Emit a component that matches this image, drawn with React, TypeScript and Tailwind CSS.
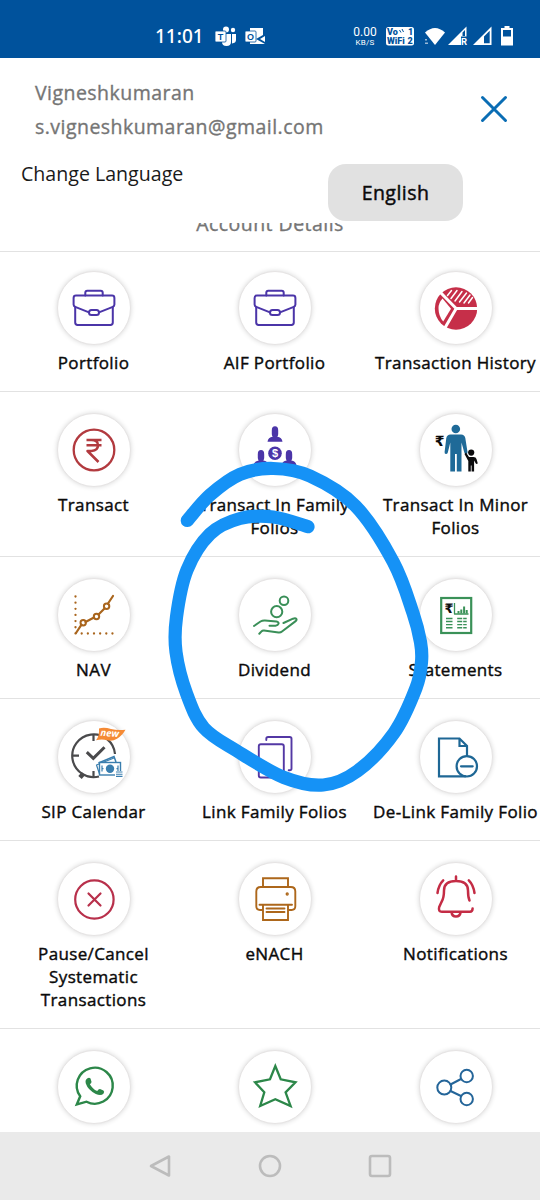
import type { ReactNode } from "react";

const S = { fill: "none", strokeLinecap: "round", strokeLinejoin: "round" } as const;

/* Icons are drawn on a 72-unit square whose origin is its centre. */

const Briefcase = () => (
  <g {...S} stroke="#4b35a8" strokeWidth="2">
    <path d="M-20.4-3.5V-10q0-2.4 2.4-2.4H18q2.4 0 2.4 2.4v6.5q0 1.6-1.6 2.4L5 4.4M-5 4.4-18.8-1.1q-1.6-.8-1.6-2.4" />
    <path d="M-18.8-1V14.6q0 2.4 2.4 2.4H16.4q2.4 0 2.4-2.4V-1M-8.7-12.4v-2.8q0-2 2-2H6.7q2 0 2 2v2.8" />
    <rect x="-5" y="2" width="10" height="5" rx="2.5" />
  </g>
);

const Pie = () => (
  <g>
    <circle cx="0" cy=".5" r="21.2" fill="#c62f49" />
    <path d="M-13.5-9.5-5 .8-12.8 13.5Q-17.5 8-17.5 0q0-5 4-9.5z" fill="#fff" />
    <path d="M-16-16 .2.5H22M.2.5-12 21.5" fill="none" stroke="#fff" strokeWidth="3" />
    <path d="M-8.5-12.5-4.500-17.500M-5-9.500 1-17.500M-1-7 6-16.500M3.500-6 10.500-15M8-5l6-8M12.500-5l4-5.500" {...S} stroke="#fff" strokeWidth="1.500" />
  </g>
);

const Transact = () => (
  <g {...S} stroke="#b23a3f" strokeWidth="2.3">
    <circle cx="0" cy="0" r="20.3" />
    <path d="M-7.500-10H7.500M-7.500-4.800H7.500M-6.500-10h4q6.500 0 6.500 5.200T-2.500 1h-4L4.500 12" strokeLinecap="butt" strokeWidth="2.500" />
  </g>
);

const Person = () => (
  <path d="M-3.2-19.5Q-3.2-23.7 0-23.7t3.2 4.2V-16q0 1.500-.9 2.800 4.600.7 5.200 4.900H-7.500q.6-4.200 5.200-4.900-.9-1.300-.9-2.800z" />
);

const FamilyTransact = () => (
  <g fill="#4b35a8">
    <Person />
    <g transform="translate(-14 23.8)"><Person /></g>
    <g transform="translate(14 23.8)"><Person /></g>
    <circle cx="0" cy="3.3" r="6.8" />
    <text x="0" y="7.2" textAnchor="middle" className="font-['Liberation_Sans'] text-[11px] font-bold" fill="#fff">$</text>
  </g>
);

const Minor = () => (
  <g>
    <g fill="#1f6a98">
      <circle cx="-.2" cy="-21" r="4.3" />
      <path d="M-5.500-15.500h10.600q3.400 0 4.200 3.500L11.500 2q.2 2-1.300 2T8.300 2.500L5.500-7.500V21.500H.8V4H-1V21.500h-4.700V-7.500L-8.200 2.500q-.4 1.500-1.900 1.500T-11.400 2l1.700-14q.8-3.500 4.200-3.500z" />
    </g>
    <g fill="#0b0b0d">
      <circle cx="15.2" cy="2.6" r="3.1" />
      <path d="M10 2.500 13 7h4.500q2.500 0 3 2l1.300 4.500-1.700.5-2-3.500v11h-2.500v-6h-.8v6h-2.500V11L8.500 4z" />
    </g>
    <text x="-16.3" y="-4" textAnchor="middle" className="font-['DejaVu_Sans'] text-[14px] font-bold" fill="#0b0b0d">₹</text>
  </g>
);

const Nav = () => (
  <g {...S} stroke="#a9651d">
    <path d="M-18.5-18.5V18.5M-12.3 18.5H19" strokeWidth="2.3" strokeDasharray="0 6.15" />
    <path d="m-18 18 5.500-8.300M-8.500 7 0 2.500M4.500-.500 10.500-6.500M14-11.500 19-19" strokeWidth="2.200" />
    <circle cx="-10.8" cy="7.7" r="2.7" strokeWidth="2" />
    <circle cx="2.5" cy="1.5" r="2.7" strokeWidth="2" />
    <circle cx="12.6" cy="-8.8" r="2.7" strokeWidth="2" />
  </g>
);

const Dividend = () => (
  <g {...S} stroke="#3a8f58" strokeWidth="2">
    <circle cx="9" cy="-14.2" r="4.3" />
    <circle cx="1.7" cy="-3.3" r="5.6" />
    <path d="M-21 11-14.500 6.500q2-1.200 4.500-1L1.500 6.500q2.500.5 2 2.200t-3 2h-6M8.500 8l9.500-4.300q2.500-.9 3.300.2t-1 2.500L7 16.500q-1.500 1.300-3.500 1L-11 15.600q-1.700-.1-2.500.8l-2.200 2.400" />
  </g>
);

const Statements = () => (
  <g {...S} stroke="#3a9158" strokeLinecap="butt">
    <rect x="-14.8" y="-17" width="30" height="35" strokeWidth="2.2" strokeLinejoin="miter" />
    <path d="M-1.500-12V-1H12.500" strokeWidth="1.300" />
    <path d="M2.500-1.500v-2.500M5.300-1.500v-4M8.100-1.500v-7M10.700-1.500v-3.500" strokeWidth="2" />
    <path d="M-10 3.500h6.500M-10 6.500h6.500M-10 9.600h6.500M-10 12.700h6.500" strokeWidth="1.400" />
    <path d="M1.200 3.500h9.500M1.200 6.500h9.500M1.200 9.600h9.500M1.200 12.700h9.500" strokeWidth="1.400" strokeDasharray="5 1 4 0" />
    <text x="-7" y="-2" textAnchor="middle" stroke="none" fill="#101010" className="font-['DejaVu_Sans'] text-[13px] font-bold">₹</text>
  </g>
);

const SipCalendar = () => (
  <g>
    <g {...S} stroke="#4a4a4c" strokeLinecap="butt">
      <path d="M21-3A21.400 21.400 0 1 0 5 19.500" strokeWidth="2.200" />
      <path d="M-.500-22.500v6.500M-21.500-1.300h6.500M-.500 20v-6" strokeWidth="2.200" />
      <path d="m-14 20.500 3.500-4" strokeWidth="4.500" />
      <path d="m-7.200-4.800 6.500 6.200L10.500-9.800" strokeWidth="3" strokeLinejoin="miter" />
    </g>
    <path d="M4.500 6 20-.500l2 5.500" fill="#fff" stroke="#3a7eae" strokeWidth="1.500" />
    <path d="M5.500 17 2.500 8 20 1" {...S} stroke="#3a7eae" strokeWidth="1.200" />
    <rect x="5.5" y="5.5" width="21" height="12.5" fill="#fff" stroke="#3a7eae" strokeWidth="1.4" />
    <circle cx="16" cy="11.8" r="4.2" fill="#3a7eae" />
    <path d="M8 8.500v6M24 8.500v6M8 11.700h1.500M22.500 11.700H24" stroke="#3a7eae" strokeWidth="1.200" />
    <path d="M21 14h8.500v6H21z" fill="#fff" />
    <path d="M22 15h6.500M22 17.200h6.500M22 19.400h6.500" stroke="#3a7eae" strokeWidth="1.100" />
    <path d="M5-28.500q5-1.700 12 .5 6 1.700 14.500.8-3.500 6-8.500 9-4.500 2.700-10 1.500-5-1.500-11 0 3.500-4 3-11.800z" fill="#f58a35" />
    <text x="15.5" y="-20.5" textAnchor="middle" fill="#fff" className="font-['Open_Sans'] text-[9.5px] font-bold italic" transform="rotate(4 16 -22)">new</text>
  </g>
);

const LinkFolios = () => (
  <g {...S} stroke="#5338a4" strokeWidth="1.9">
    <rect x="-16.2" y="-12.8" width="25" height="33.3" rx="2" />
    <path d="M-8.700-17v-1.200q0-1.800 1.800-1.800H14.700q1.800 0 1.800 1.800V11.500q0 1.800-1.800 1.800h-1" />
  </g>
);

const DeLink = () => (
  <g {...S} stroke="#1e6795" strokeWidth="2.2" strokeLinejoin="miter">
    <path d="M11-1.500V-11L3.500-18.500H-17V19.300H9.500M3.500-18V-11H11" />
    <circle cx="10.8" cy="9.3" r="10.2" />
    <path d="M5 9.300H16.700" />
  </g>
);

const PauseCancel = () => (
  <g {...S} stroke="#b8304b" strokeWidth="2.2">
    <circle cx=".4" cy=".5" r="19.2" />
    <path d="m-5.500-5.500 12 12m0-12-12 12" />
  </g>
);

const Printer = () => (
  <g {...S} stroke="#ad671b" strokeWidth="1.9" strokeLinejoin="miter">
    <path d="M-12-12v-8.700H13V-12M-12 11h-3q-3.700 0-3.700-3.700V-7.500q0-4.500 4.500-4.500h30q4.500 0 4.500 4.500V7.300Q20.300 11 16.600 11H13M-15.500 5.700H17M-12 5.700V21H13V5.700M-8.500 9.500H9.500M-8.500 13H9.500" />
    <circle cx="12.2" cy="-5" r=".7" />
  </g>
);

const Bell = () => (
  <g {...S} stroke="#c42c45" strokeWidth="2.5">
    <path d="M0-22.500v4M13.500 1.500Q12-2 12-8.500 12-18 0-18t-12 9.500Q-12-1-14.500 3L-16.800 8q-1.200 4.700 2.800 4.700H14q2.500 0 2.600-3.200M-4.500 13Q-4 17.500 0 17.500T4.700 13M-12.800-18.700Q-17.500-14-18.500-6M12.800-18.700Q17.500-14 18.500-6" />
  </g>
);

const WhatsApp = () => (
  <g {...S} stroke="#2c8749" strokeWidth="2.4">
    <path d="M-13.800 9.300A18 18 0 1 1-7.500 14.700L-17.200 17.500z" strokeLinejoin="miter" />
    <path d="M-6.500-8.800q1.800-1 3 .3l1 3.200q.2 1.300-1.600 2.500Q-1.500 2 3.200 4q1.300-2 2.800-1.900l3.400 1.500q1.400.9.200 2.800Q7.200 9.300 1.800 7-6 3.200-8.200-3.400-9.200-7.300-6.500-8.800z" fill="#2c8749" stroke="none" />
  </g>
);

const Star = () => (
  <path d="M.3-21 5.700-7.700 20.500-4.700 10.600 5.400 15.600 19 .3 12.200-14.800 19-10.700 5.300-20-4.700-5-7.700z" fill="none" stroke="#2c8749" strokeWidth="2.3" />
);

const Share = () => (
  <g {...S} stroke="#246599" strokeWidth="2">
    <circle cx="-11.7" cy=".6" r="7" />
    <circle cx="10.7" cy="-11" r="6.2" />
    <circle cx="10.7" cy="12" r="6.2" />
    <path d="M-5.500-2.500 5-8M-5.500 4 5 9" />
  </g>
);

type Item = { label: string; width?: string; icon: ReactNode };

const rows: Item[][] = [
  [
    { label: "Portfolio", icon: <Briefcase /> },
    { label: "AIF Portfolio", icon: <Briefcase /> },
    { label: "Transaction History", icon: <Pie /> },
  ],
  [
    { label: "Transact", icon: <Transact /> },
    { label: "Transact In Family Folios", width: "w-[165px]", icon: <FamilyTransact /> },
    { label: "Transact In Minor Folios", width: "w-[165px]", icon: <Minor /> },
  ],
  [
    { label: "NAV", icon: <Nav /> },
    { label: "Dividend", icon: <Dividend /> },
    { label: "Statements", icon: <Statements /> },
  ],
  [
    { label: "SIP Calendar", icon: <SipCalendar /> },
    { label: "Link Family Folios", icon: <LinkFolios /> },
    { label: "De-Link Family Folio", icon: <DeLink /> },
  ],
  [
    { label: "Pause/Cancel Systematic Transactions", width: "w-[130px]", icon: <PauseCancel /> },
    { label: "eNACH", icon: <Printer /> },
    { label: "Notifications", icon: <Bell /> },
  ],
  [
    { label: "", icon: <WhatsApp /> },
    { label: "", icon: <Star /> },
    { label: "", icon: <Share /> },
  ],
];

function Tile({ label, width, icon }: Item) {
  return (
    <div className="flex flex-col items-center">
      <div className="size-[74px] shrink-0 rounded-full border border-[#e6e4e4] bg-white shadow-[0_0_5px_rgba(0,0,0,0.16)]">
        <svg viewBox="-36 -36 72 72" className="size-[72px] overflow-visible">{icon}</svg>
      </div>
      <div className={`mt-[6px] mb-[1px] text-center text-[17px] leading-[23px] tracking-[0.36px] text-[#0a0a0a] [-webkit-text-stroke:0.4px_#0a0a0a] ${width ?? "whitespace-nowrap"}`}>
        {label}
      </div>
    </div>
  );
}

const pts = [
  [187.3, 520.5], [210, 495], [240, 474.3], [273.3, 468.5], [310, 476], [355.5, 506], [393.3, 562],
  [413, 613], [420.5, 642], [421.5, 662], [416, 688], [394, 733], [357.5, 771], [323.3, 785], [284, 777.5], [237, 751], [204, 728],
  [186.7, 694], [176, 652], [176.5, 617], [187, 570], [210, 534], [240, 518.5], [273.3, 517], [308, 526.7],
];

function smooth(p: number[][]) {
  let d = `M${p[0][0]} ${p[0][1]}`;
  for (let i = 0; i < p.length - 1; i++) {
    const a = p[Math.max(i - 1, 0)];
    const b = p[i];
    const c = p[i + 1];
    const e = p[Math.min(i + 2, p.length - 1)];
    d += `C${b[0] + (c[0] - a[0]) / 6} ${b[1] + (c[1] - a[1]) / 6} ${c[0] - (e[0] - b[0]) / 6} ${c[1] - (e[1] - b[1]) / 6} ${c[0]} ${c[1]}`;
  }
  return d;
}

function StatusBar() {
  return (
    <div className="flex h-[58px] shrink-0 items-start bg-[#00529c] pt-[24px] pl-[155px] text-white">
      <span className="w-[60px] font-['Noto_Sans'] text-[19px] leading-6 font-medium">11:01</span>
      <svg className="mt-[1px] h-6 w-[52px]" viewBox="0 0 52 24" fill="#fff">
        <circle cx="11" cy="4.5" r="3" />
        <circle cx="18" cy="5" r="2.2" />
        <path d="M7 9h9v8q0 4-4.500 4T7 17zM17 9h4v6q0 3-4 3.500z" />
        <rect x="0" y="6" width="11" height="11" rx="1" stroke="#00529c" strokeWidth=".8" />
        <text x="5.5" y="14.8" textAnchor="middle" className="font-['Liberation_Sans'] text-[9px] font-bold" fill="#00529c">T</text>
        <path d="M35 3h13v7l-7 4 9 5H35z" />
        <path d="M50 11v6l-5-3z" />
        <rect x="30" y="6" width="11" height="11" rx="1" stroke="#00529c" strokeWidth=".8" />
        <text x="35.5" y="14.8" textAnchor="middle" className="font-['Liberation_Sans'] text-[9px] font-bold" fill="#00529c">O</text>
      </svg>
      <div className="ml-[85px] flex w-[26px] flex-col items-center font-['Roboto']">
        <span className="mt-[2px] text-[12px] leading-[12px]">0.00</span>
        <span className="text-[8px] leading-[9px] tracking-[0.2px]">KB/S</span>
      </div>
      <svg className="mt-[3px] ml-[8px] h-[19px] w-[28px]" viewBox="0 0 28 19">
        <rect width="28" height="18.5" rx="2.5" fill="#fff" />
        <g fill="#00529c" className="font-['Roboto'] text-[9px] font-black">
          <text x="1" y="8.2">Vo</text>
          <text x="22" y="8.2">1</text>
          <text x="1" y="17">WiFi</text>
          <text x="21.5" y="17">2</text>
        </g>
        <path d="m13.500 3 1.500 2.500M16 2l1.500 3" stroke="#00529c" strokeWidth="1" />
      </svg>
      <svg className="mt-[2px] ml-[11px] h-5 w-[92px]" viewBox="0 0 92 20" fill="#fff">
        <path d="M0 6.500Q10-2.500 20 6.500L10 19z" />
        <path d="M0 13h2v1.500H0zM0 16.500h3v1.500H0z" opacity=".6" />
        <path d="M23 19 41.500.500V10.500h-5.500V19zM37.500 6.500V10H40V4z" fillRule="evenodd" />
        <text x="36" y="19" className="font-['Roboto'] text-[9.5px] font-bold">R</text>
        <path d="M48 19 66.500.500V19zM59 10.500V17.200h5.700V4.800z" fillRule="evenodd" />
        <path d="M79.500 0h5v2H88v17.500H76V2h3.500zM78 4v6.500h8V4z" fillRule="evenodd" />
      </svg>
    </div>
  );
}

export default function App() {
  return (
    <div className="relative flex h-[1200px] w-[540px] flex-col overflow-hidden bg-white font-['Open_Sans',sans-serif]">
      <StatusBar />
      <header className="flex h-[165px] shrink-0 flex-col">
        <div className="flex justify-between pt-[18px] pr-[32px] pl-[35px]">
          <div className="text-[19.5px] leading-[33.5px] tracking-[0.46px] text-[#757575] [-webkit-text-stroke:0.35px_#757575]">
            <div>Vigneshkumaran</div>
            <div>s.vigneshkumaran@gmail.com</div>
          </div>
          <svg className="mt-[19px] size-[28px]" viewBox="0 0 28 28" fill="none" stroke="#0a6db4" strokeWidth="3" strokeLinecap="round">
            <path d="m2.500 2.500 23 23m0-23-23 23" />
          </svg>
        </div>
        <div className="flex items-start justify-between pr-[77px] pl-[21px]">
          <span className="mt-[17px] text-[19.6px] leading-[28px] text-[#1a1a1a]">Change Language</span>
          <button className="mt-[21px] h-[57px] w-[135px] rounded-[18px] bg-[#e1e1e1] text-[19.5px] tracking-[0.45px] text-[#0a0a0a] [-webkit-text-stroke:0.45px_#0a0a0a]">English</button>
        </div>
      </header>
      <main className="min-h-0 flex-1 overflow-hidden">
        <div className="h-[28px] overflow-hidden">
          <div className="-mt-[14px] text-center text-[19.5px] leading-[30px] tracking-[0.46px] text-[#757575] [-webkit-text-stroke:0.35px_#757575]">Account Details</div>
        </div>
        {rows.map((row, i) => (
          <section key={i} className={`border-t border-[#e2e2e2] ${i === 0 ? "pt-[19px] pb-[16px]" : "pt-[21px] pb-[16px]"}`}>
            <div className="ml-[3px] grid w-[543px] grid-cols-3">
              {row.map((item, j) => (
                <Tile key={j} {...item} />
              ))}
            </div>
          </section>
        ))}
      </main>
      <nav className="flex h-[68px] shrink-0 items-center justify-center gap-[86px] bg-[#eaeaea]">
        {["M21 2.500V21.500L3 12z", "M12 2a10 10 0 1 0 0 20a10 10 0 1 0 0-20", "M4 2H20q2 0 2 2V20q0 2-2 2H4q-2 0-2-2V4q0-2 2-2z"].map((d) => (
          <svg key={d} className="size-6" viewBox="0 0 24 24" fill="none" stroke="#bcbcbc" strokeWidth="2.6" strokeLinejoin="round">
            <path d={d} />
          </svg>
        ))}
      </nav>
      <svg className="pointer-events-none absolute inset-0" width="540" height="1200" viewBox="0 0 540 1200">
        <path d={smooth(pts)} fill="none" stroke="#1592f6" strokeWidth="13.2" strokeLinecap="round" strokeLinejoin="round" />
      </svg>
    </div>
  );
}
